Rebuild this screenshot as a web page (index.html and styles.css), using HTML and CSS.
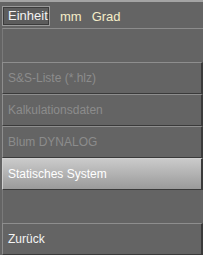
FILE: index.html
```html
<!DOCTYPE html>
<html lang="de">

<head>
    <meta charset="UTF-8">
    <title>Menü</title>
    <link rel="stylesheet" href="styles.css">
</head>

<body>
    <div class="topbar">
        <div class="unit-btn">Einheit</div>
        <div class="unit">mm</div>
        <div class="unit">Grad</div>
    </div>
    <div class="panel">
        <div class="spacer"></div>
        <div class="item disabled">S&amp;S-Liste (*.hlz)</div>
        <div class="item disabled">Kalkulationsdaten</div>
        <div class="item disabled">Blum DYNALOG</div>
        <div class="item active">Statisches System</div>
        <div class="spacer"></div>
        <div class="item">Zurück</div>
    </div>
</body>

</html>
```

FILE: styles.css
```css
* {
    margin: 0;
    padding: 0;
    box-sizing: border-box;
}

body {
    width: 203px;
    height: 255px;
    overflow: hidden;
    background-color: #646464;
    border-top: 2px solid #a4a4a4;
    font-family: "Liberation Sans", Arial, sans-serif;
    font-size: 12px;
}

.topbar {
    height: 26px;
    display: flex;
    align-items: center;
    padding: 2px 0 0 2px;
}

.unit-btn {
    width: 48px;
    height: 20px;
    border: 1px solid #9a9a9a;
    box-shadow: inset 1px 1px 0 #3c3c3c, inset -1px -1px 0 #3c3c3c;
    background-color: #5c5c5c;
    color: #f2f2f2;
    padding-left: 5px;
    font-size: 13px;
    line-height: 18px;
}

.unit {
    color: #f4edc8;
    font-size: 13px;
    margin-left: 10px;
}

/* panel under the unit row */
.panel {
    margin-left: 2px;
    border-top: 1px solid #8c8c8c;
    border-left: 1px solid #7a7a7a;
}

.spacer {
    height: 33px;
}

.item {
    height: 32px;
    margin-left: -1px;
    border-top: 1px solid #8e8e8e;
    border-left: 1px solid #8e8e8e;
    border-right: 2px solid #3a3a3a;
    border-bottom: 1px solid #3a3a3a;
    color: #f4f4f4;
    padding-left: 5px;
    line-height: 31px;
}

.item.disabled {
    color: #8c8c8c;
}

.item.active {
    background: linear-gradient(#cacaca, #9a9a9a);
    border-color: #d0d0d0 #3a3a3a #3a3a3a #d0d0d0;
    color: #ffffff;
}
```
